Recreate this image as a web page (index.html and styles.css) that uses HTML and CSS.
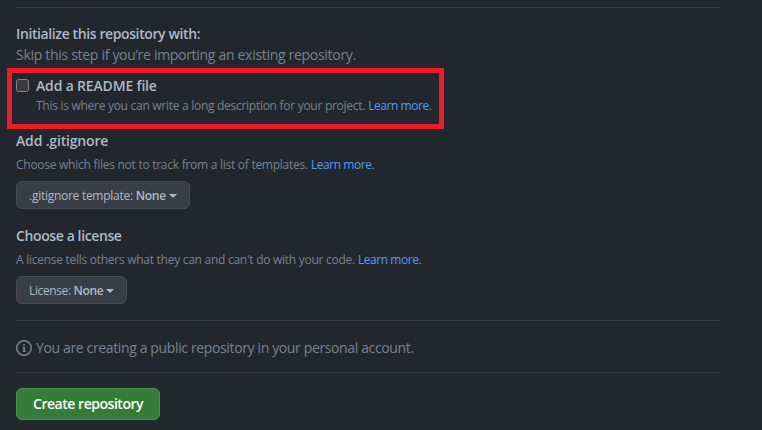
FILE: index.html
```html
<!DOCTYPE html>
<html lang="en">
<head>
<meta charset="utf-8">
<title>Create a new repository</title>
<link rel="stylesheet" href="styles.css">
</head>
<body>
<main class="form">
  <hr class="rule">
  <header class="intro">
    <h2 class="heading"><span class="t-init">Initialize this repository with:</span></h2>
    <p class="lead"><span class="t-skip">Skip this step if you’re importing an existing repository.</span></p>
  </header>
  <section class="readme">
    <input class="check" type="checkbox" id="readme">
    <div class="readme-text">
      <label class="heading" for="readme"><span class="t-readme">Add a README file</span></label>
      <p class="note"><span class="t-where">This is where you can write a long description for your project.</span> <a class="link">Learn more.</a></p>
    </div>
  </section>
  <section class="option">
    <h2 class="heading"><span class="t-ignore">Add .gitignore</span></h2>
    <p class="note"><span class="t-choose">Choose which files not to track from a list of templates.</span> <a class="link">Learn more.</a></p>
    <button class="select select-ignore"><span class="t-template">.gitignore template: <b>None</b></span><i class="caret"></i></button>
  </section>
  <section class="option">
    <h2 class="heading"><span class="t-license">Choose a license</span></h2>
    <p class="note"><span class="t-tells">A license tells others what they can and can't do with your code.</span> <a class="link">Learn more.</a></p>
    <button class="select select-license"><span class="t-lic">License: <b>None</b></span><i class="caret"></i></button>
  </section>
  <hr class="rule">
  <div class="info">
    <svg class="info-icon" width="16" height="16" viewBox="0 0 16 16" fill="currentColor"><path fill-rule="evenodd" d="M8 1.5a6.5 6.5 0 100 13 6.5 6.5 0 000-13zM0 8a8 8 0 1116 0A8 8 0 010 8zm6.500-.25A.75.75 0 017.250 7h1a.75.75 0 01.75.75v2.750h.25a.75.75 0 010 1.500h-2a.75.75 0 010-1.500h.25v-2h-.25a.75.75 0 01-.75-.75zM8 6a1 1 0 100-2 1 1 0 000 2z"/></svg>
    <span class="t-info">You are creating a public repository in your personal account.</span>
  </div>
  <hr class="rule">
  <button class="create"><span class="t-create">Create repository</span></button>
</main>
</body>
</html>
```
FILE: styles.css
```css
* { box-sizing: border-box; }
body {
  margin: 0;
  height: 430px;
  overflow: hidden;
  background: #22272e;
  color: #adbac7;
  font: 14px/21px "Segoe UI", "Open Sans", "Noto Sans", sans-serif;
  white-space: nowrap;
}
.form { display: flex; flex-direction: column; width: 704px; margin: 7px 0 0 16px; }
.rule { width: 100%; height: 1px; margin: 0; border: 0; background: #373e47; }
.heading { display: block; margin: 0; font-size: 14px; line-height: 21px; font-weight: 600; }
.lead, .note { margin: 0; color: #768390; }
.note { font-size: 12px; line-height: 18px; }
.intro { height: 60px; padding-top: 15px; }
.readme {
  display: flex;
  width: 437px;
  height: 61px;
  margin-left: -9px;
  padding: 2px 0 0 4px;
  border: 5px solid #ed1c24;
}
.readme .note { margin-top: 1px; }
.check {
  appearance: none;
  flex: none;
  width: 13px;
  height: 13px;
  margin: 4px 7px 0 0;
  border: 1px solid #858585;
  border-radius: 2.5px;
  background: #3b3b3b;
}
.link { color: #539bf5; letter-spacing: -0.45px; }
.option { height: 95px; padding-top: 1px; }
.option .note { margin: 5px 0 7px; }
.select {
  display: flex;
  align-items: center;
  height: 28px;
  padding: 2px 12px 0;
  border: 1px solid #444c56;
  border-radius: 6px;
  background: #373e47;
  color: #adbac7;
  font: 12px/20px "Segoe UI", "Open Sans", "Noto Sans", sans-serif;
}
.select b { font-weight: 600; }
.select-ignore { width: 174px; }
.select-license { width: 111px; }
.caret { margin: -1px 0 0 3px; border: 4px solid transparent; border-top-color: currentColor; border-bottom: 0; }
.info { display: flex; align-items: center; gap: 4px; height: 51px; padding-top: 3px; color: #768390; }
.info-icon { flex: none; }
.t-info { margin-top: -2px; }
.create {
  width: 144px;
  height: 32px;
  margin-top: 15px;
  padding: 0 16px;
  border: 1px solid #46954a;
  border-radius: 6px;
  background: #347d39;
  color: #fff;
  text-align: left;
  font: 600 14px/20px "Segoe UI", "Open Sans", "Noto Sans", sans-serif;
}
.option + .rule { margin-top: 1px; }

.t-init { letter-spacing: -0.39px; }
.t-skip { letter-spacing: -0.3px; }
.t-readme { letter-spacing: -0.17px; }
.t-where { letter-spacing: -0.28px; }
.t-ignore { letter-spacing: -0.17px; }
.t-choose { letter-spacing: -0.265px; }
.t-template { letter-spacing: -0.27px; }
.t-license { letter-spacing: -0.39px; }
.t-tells { letter-spacing: -0.27px; }
.t-lic { letter-spacing: -0.38px; }
.t-info { letter-spacing: -0.365px; }
.t-create { letter-spacing: -0.47px; }
```
